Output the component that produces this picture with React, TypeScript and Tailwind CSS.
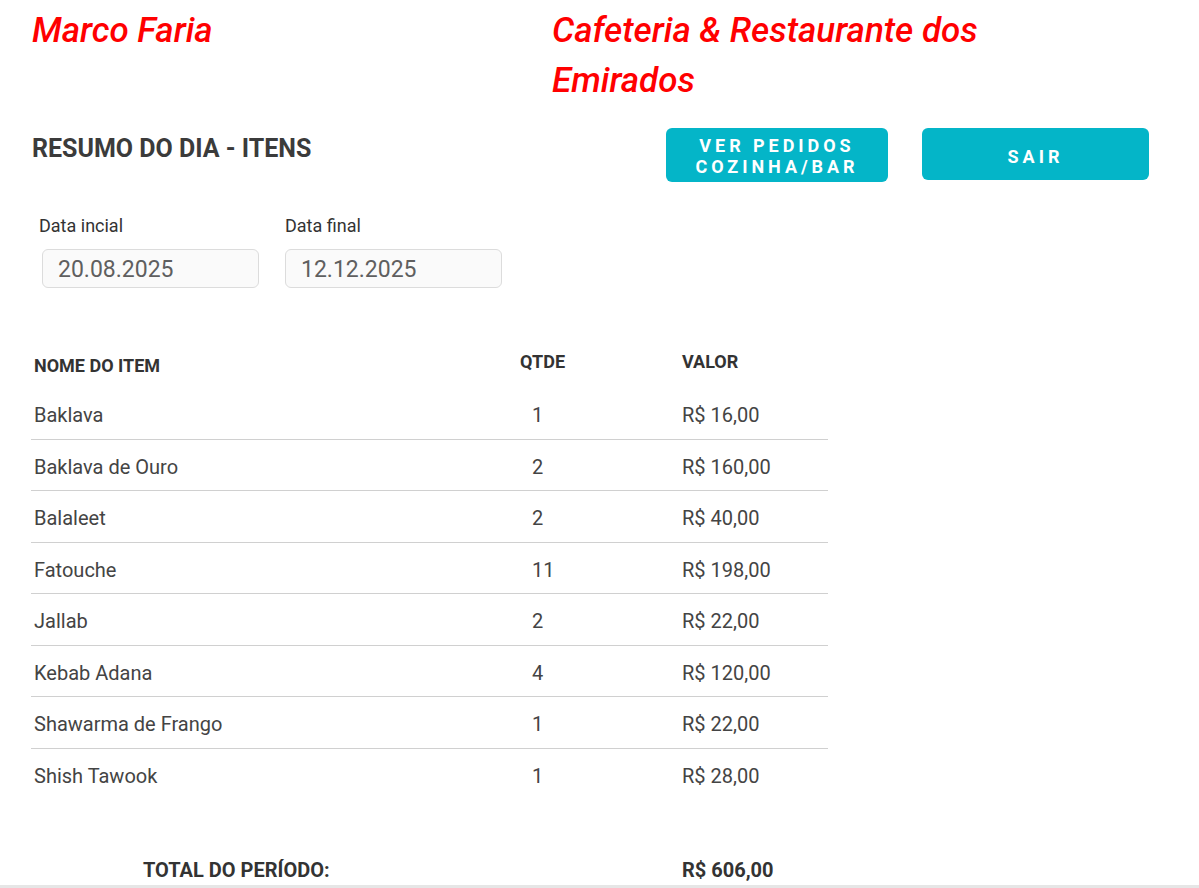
import React from 'react';

interface ItemRow {
  nome: string;
  qtde: number;
  valor: string;
}

const itens: ItemRow[] = [
  { nome: 'Baklava', qtde: 1, valor: 'R$ 16,00' },
  { nome: 'Baklava de Ouro', qtde: 2, valor: 'R$ 160,00' },
  { nome: 'Balaleet', qtde: 2, valor: 'R$ 40,00' },
  { nome: 'Fatouche', qtde: 11, valor: 'R$ 198,00' },
  { nome: 'Jallab', qtde: 2, valor: 'R$ 22,00' },
  { nome: 'Kebab Adana', qtde: 4, valor: 'R$ 120,00' },
  { nome: 'Shawarma de Frango', qtde: 1, valor: 'R$ 22,00' },
  { nome: 'Shish Tawook', qtde: 1, valor: 'R$ 28,00' },
];

const DateField: React.FC<{ label: string; value: string; inset?: boolean }> = ({ label, value, inset }) => (
  <div className="flex flex-col w-[246px]">
    <span className="text-[18px] leading-[24px] text-[#333]">{label}</span>
    <div
      className={`mt-[11px] h-[39px] w-[217px] rounded-[6px] border border-[#dcdcdc] bg-[#fafafa] pl-[15px] pt-[3px] flex items-center text-[23px] text-[#5f5f5f] ${
        inset ? 'ml-[3px]' : ''
      }`}
    >
      {value}
    </div>
  </div>
);

export default function App() {
  return (
    <div
      className="w-[1199px] h-[888px] bg-white flex flex-col overflow-hidden"
      style={{ fontFamily: 'Roboto, "Liberation Sans", sans-serif' }}
    >
      {/* Titles */}
      <div className="flex pl-[32px] pt-[6px]">
        <h1 className="w-[520px] text-[35px] leading-[50px] italic font-medium text-[#ff0000]">Marco Faria</h1>
        <h2 className="w-[450px] text-[35px] leading-[50px] italic font-medium text-[#ff0000]">
          Cafeteria &amp; Restaurante dos Emirados
        </h2>
      </div>

      {/* Heading + buttons */}
      <div className="flex items-start pl-[32px] mt-[22px]">
        <h3 className="w-[634px] pt-[5px] text-[25px] leading-[32px] font-bold text-[#3b3b3b]">RESUMO DO DIA - ITENS</h3>
        <button className="w-[222px] h-[54px] pt-[1px] rounded-[6px] bg-[#04b5c8] text-white text-[18px] leading-[21px] font-bold tracking-[0.22em]">
          VER PEDIDOS
          <br />
          COZINHA/BAR
        </button>
        <button className="ml-[34px] w-[227px] h-[52px] pt-[4px] rounded-[6px] bg-[#04b5c8] text-white text-[18px] font-bold tracking-[0.22em]">
          SAIR
        </button>
      </div>

      {/* Dates */}
      <div className="flex pl-[39px] mt-[32px]">
        <DateField label="Data incial" value="20.08.2025" inset />
        <DateField label="Data final" value="12.12.2025" />
      </div>

      {/* Table */}
      <div className="ml-[31px] mt-[52px] w-[797px]">
        <div className="flex h-[48px] text-[18px] font-bold text-[#333]">
          <div className="w-[486px] pl-[3px] pt-[12px]">NOME DO ITEM</div>
          <div className="w-[162px] pl-[3px] pt-[8px]">QTDE</div>
          <div className="flex-1 pl-[3px] pt-[8px]">VALOR</div>
        </div>
        {itens.map((item, i) => (
          <div
            key={item.nome}
            className={`flex items-center h-[51.5px] pt-[4px] text-[20px] text-[#444] ${
              i < itens.length - 1 ? 'border-b border-[#d0d0d0]' : ''
            }`}
          >
            <div className="w-[486px] pl-[3px]">{item.nome}</div>
            <div className="w-[162px] pl-[15px]">{item.qtde}</div>
            <div className="flex-1 pl-[3px]">{item.valor}</div>
          </div>
        ))}
        <div className="flex mt-[55px] text-[20px] font-bold text-[#333]">
          <div className="w-[648px] pl-[112px]">TOTAL DO PERÍODO:</div>
          <div className="flex-1 pl-[3px]">R$ 606,00</div>
        </div>
      </div>

      <div className="mt-auto h-[3px] shrink-0 bg-[#e6e6e6]" />
    </div>
  );
}
